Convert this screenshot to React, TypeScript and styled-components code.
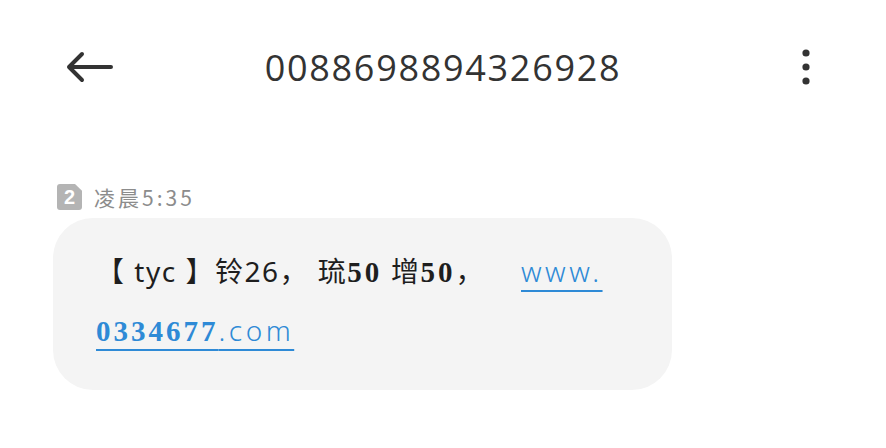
import { FunctionComponent } from "react";
import styled, { createGlobalStyle } from "styled-components";

const GlobalStyle = createGlobalStyle`
  html, body {
    margin: 0;
    padding: 0;
    background: #ffffff;
  }
  body {
    font-family: "Noto Sans", "Noto Sans CJK SC", sans-serif;
  }
`;

const PageRoot = styled.div`
  width: 886px;
  height: 448px;
  display: flex;
  flex-direction: column;
  background: #ffffff;
  overflow: hidden;
`;

const TopBar = styled.header`
  height: 134px;
  display: grid;
  grid-template-columns: 1fr auto 1fr;
  align-items: center;
  padding: 0 65px;
  box-sizing: border-box;
`;

const IconButton = styled.button<{ $end?: boolean }>`
  border: 0;
  background: none;
  padding: 0;
  display: flex;
  justify-self: ${(p) => (p.$end ? "end" : "start")};
  margin-right: ${(p) => (p.$end ? "11px" : "0")};
  color: #333333;
  cursor: pointer;
`;

const Title = styled.h1`
  margin: 0;
  font-family: "Open Sans", "Liberation Sans", sans-serif;
  font-weight: 400;
  font-size: 36px;
  letter-spacing: 1.7px;
  color: #333333;
`;

const Thread = styled.section`
  display: flex;
  flex-direction: column;
  align-items: flex-start;
  padding: 50px 0 0 53px;
`;

const MetaRow = styled.div`
  display: flex;
  align-items: center;
  gap: 12px;
  height: 26px;
  margin-left: 4px;
`;

const SimBadge = styled.span`
  width: 25px;
  height: 26px;
  border-radius: 3px;
  background: #b4b4b4;
  color: #ffffff;
  font-family: "Liberation Sans", sans-serif;
  font-weight: 700;
  font-size: 20px;
  display: flex;
  align-items: center;
  justify-content: center;
  clip-path: polygon(0 0, 72% 0, 100% 26%, 100% 100%, 0 100%);
`;

const Time = styled.span`
  font-family: "Noto Sans CJK SC", sans-serif;
  font-size: 21px;
  color: #8c8c8c;
  letter-spacing: 3px;
`;

const Bubble = styled.div`
  margin-top: 8px;
  width: 619px;
  height: 172px;
  box-sizing: border-box;
  border-radius: 40px;
  background: #f4f4f4;
  padding: 24px 20px 0 43px;
  font-family: "Noto Sans", "Noto Sans CJK SC", sans-serif;
  font-size: 28px;
  line-height: 58px;
  letter-spacing: 1.5px;
  color: #1e1e1e;
  white-space: nowrap;
`;

const Num = styled.span`
  font-family: "Liberation Serif", serif;
  font-weight: 700;
  font-size: 29px;
  letter-spacing: 3px;
`;

const Link = styled.a`
  margin-left: 36px;
  color: #2e8ad6;
  text-decoration: underline;
  text-decoration-thickness: 2px;
  text-underline-offset: 8px;
  font-family: "Noto Sans", sans-serif;
  font-weight: 300;
  letter-spacing: 3.5px;
`;

const BackArrow = () => (
  <svg width="48" height="32" viewBox="0 0 48 32" fill="none">
    <path
      d="M46 16H4M17 3L4 16l13 13"
      stroke="currentColor"
      strokeWidth="4"
      strokeLinecap="round"
      strokeLinejoin="round"
    />
  </svg>
);

const MoreDots = () => (
  <svg width="8" height="36" viewBox="0 0 8 36" fill="currentColor">
    <circle cx="4" cy="4" r="3.6" />
    <circle cx="4" cy="18" r="3.6" />
    <circle cx="4" cy="32" r="3.6" />
  </svg>
);

const App: FunctionComponent = () => {
  return (
    <PageRoot>
      <GlobalStyle />
      <TopBar>
        <IconButton aria-label="back">
          <BackArrow />
        </IconButton>
        <Title>0088698894326928</Title>
        <IconButton $end aria-label="more">
          <MoreDots />
        </IconButton>
      </TopBar>
      <Thread>
        <MetaRow>
          <SimBadge>2</SimBadge>
          <Time>凌晨5:35</Time>
        </MetaRow>
        <Bubble>
          【 tyc 】铃26， 琉<Num>50</Num> 增<Num>50</Num>，
          <Link href="#">
            www.
            <br />
            <Num>0334677</Num>.com
          </Link>
        </Bubble>
      </Thread>
    </PageRoot>
  );
};

export default App;
